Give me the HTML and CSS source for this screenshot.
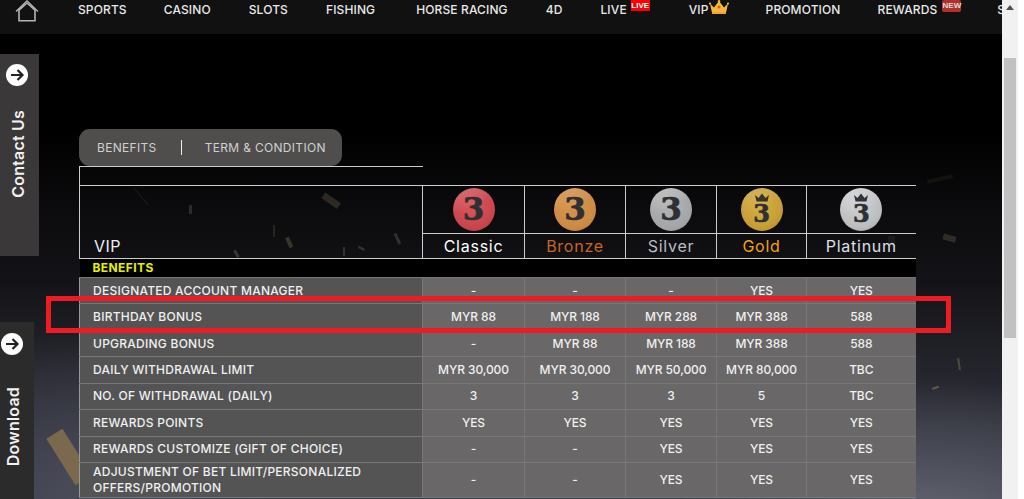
FILE: index.html
```html
<!DOCTYPE html>
<html lang="en">
<head>
<meta charset="utf-8">
<title>VIP Benefits</title>
<link rel="stylesheet" href="styles.css">
</head>
<body>
<div class="shell">
  <div class="viewport">
    <header class="topbar">
      <a class="home" aria-label="Home">
        <svg width="24" height="22" viewBox="0 0 24 22"><path d="M1 11.500 12 .8l11 10.700" fill="none" stroke="#bdbdbd" stroke-width="1.200"/><path d="M4 10.200 12 3l8 7.200V20.700H4Z" fill="none" stroke="#b5b5b5" stroke-width="1.600"/></svg>
      </a>
      <nav class="nav">
        <a class="nav-item">SPORTS</a>
        <a class="nav-item nudge-back">CASINO</a>
        <a class="nav-item">SLOTS</a>
        <a class="nav-item">FISHING</a>
        <a class="nav-item nudge-3">HORSE RACING</a>
        <a class="nav-item">4D</a>
        <a class="nav-item">LIVE<span class="badge badge-live">LIVE</span></a>
        <a class="nav-item nudge-2">VIP<svg class="crown" width="20" height="14" viewBox="0 0 20 14"><path d="M1 3.500 5 7.500 10 1l5 6.500 4-4-1.800 8.500H2.800Z" fill="#f7b73c"/><rect x="3" y="12" width="14" height="2" fill="#eea52c"/><circle cx="1" cy="3.500" r="1.100" fill="#f7b73c"/><circle cx="19" cy="3.500" r="1.100" fill="#f7b73c"/><circle cx="10" cy="1.200" r="1.200" fill="#f7b73c"/><circle cx="10" cy="7" r="1.500" fill="#e0562a"/></svg></a>
        <a class="nav-item">PROMOTION</a>
        <a class="nav-item nudge-back">REWARDS<span class="badge badge-new">NEW</span></a>
        <a class="nav-item">SPECIAL</a>
      </nav>
    </header>

    <main class="content">
      <div class="tabs">
        <a class="tab">BENEFITS</a>
        <span class="tab-sep"></span>
        <a class="tab">TERM &amp; CONDITION</a>
      </div>
      <table class="vip">
        <colgroup>
          <col class="c-label"><col class="c1"><col class="c2"><col class="c3"><col class="c4"><col class="c5">
        </colgroup>
        <tbody>
          <tr class="r-top"><td class="corner"></td><td colspan="5" class="blank"></td></tr>
          <tr class="r-medal">
            <td rowspan="2" class="vip-title">VIP</td>
            <td class="medal-cell"><div class="medal m-classic"><span class="three">3</span></div></td>
            <td class="medal-cell"><div class="medal m-bronze"><span class="three">3</span></div></td>
            <td class="medal-cell"><div class="medal m-silver"><span class="three">3</span></div></td>
            <td class="medal-cell"><div class="medal m-gold"><svg class="mini-crown" width="16" height="10" viewBox="0 0 16 10"><path d="M1 2 4.500 5 8 .5 11.500 5 15 2 13.500 8.500H2.500Z" fill="#3a3226"/></svg><span class="three three-low">3</span></div></td>
            <td class="medal-cell end"><div class="medal m-platinum"><svg class="mini-crown" width="16" height="10" viewBox="0 0 16 10"><path d="M1 2 4.500 5 8 .5 11.500 5 15 2 13.500 8.500H2.500Z" fill="#33343a"/></svg><span class="three three-low">3</span></div></td>
          </tr>
          <tr class="r-name">
            <td class="name n-classic">Classic</td>
            <td class="name n-bronze">Bronze</td>
            <td class="name n-silver">Silver</td>
            <td class="name n-gold">Gold</td>
            <td class="name n-platinum end">Platinum</td>
          </tr>
          <tr class="r-head"><td colspan="6">BENEFITS</td></tr>
          <tr class="r"><th>DESIGNATED ACCOUNT MANAGER</th><td>-</td><td>-</td><td>-</td><td>YES</td><td>YES</td></tr>
          <tr class="r"><th>BIRTHDAY BONUS</th><td>MYR 88</td><td>MYR 188</td><td>MYR 288</td><td>MYR 388</td><td>588</td></tr>
          <tr class="r"><th>UPGRADING BONUS</th><td>-</td><td>MYR 88</td><td>MYR 188</td><td>MYR 388</td><td>588</td></tr>
          <tr class="r"><th>DAILY WITHDRAWAL LIMIT</th><td>MYR 30,000</td><td>MYR 30,000</td><td>MYR 50,000</td><td>MYR 80,000</td><td>TBC</td></tr>
          <tr class="r"><th>NO. OF WITHDRAWAL (DAILY)</th><td>3</td><td>3</td><td>3</td><td>5</td><td>TBC</td></tr>
          <tr class="r"><th>REWARDS POINTS</th><td>YES</td><td>YES</td><td>YES</td><td>YES</td><td>YES</td></tr>
          <tr class="r"><th>REWARDS CUSTOMIZE (GIFT OF CHOICE)</th><td>-</td><td>-</td><td>YES</td><td>YES</td><td>YES</td></tr>
          <tr class="r r-tall"><th>ADJUSTMENT OF BET LIMIT/PERSONALIZED OFFERS/PROMOTION</th><td>-</td><td>-</td><td>YES</td><td>YES</td><td>YES</td></tr>
        </tbody>
      </table>
    </main>

    <svg class="confetti" width="1002" height="499" viewBox="0 0 1002 499" aria-hidden="true">
      <g fill="#8a7a5c">
        <rect x="59.500" y="429.500" width="19" height="55" transform="rotate(-32 69 457)" fill="#7a694c"/>
        <rect x="322" y="197" width="19" height="7" transform="rotate(35 331 200)" opacity=".28"/>
        <rect x="189" y="205" width="3" height="9" opacity=".28"/>
        <rect x="130" y="196" width="22" height="1" transform="rotate(50 141 197)" opacity=".15"/>
        <rect x="287" y="237" width="4" height="11" transform="rotate(-25 289 242)" opacity=".35"/>
        <rect x="396" y="233" width="3" height="12" transform="rotate(-25 397 239)" opacity=".3"/>
        <rect x="358" y="247" width="7" height="2.500" transform="rotate(25 361 248)" opacity=".3"/>
        <rect x="235" y="250" width="3" height="8" transform="rotate(-30 236 254)" opacity=".35"/>
        <rect x="343" y="247" width="2" height="9" opacity=".3"/>
        <rect x="273" y="225" width="2" height="12" opacity=".22"/>
        <rect x="943" y="235" width="13" height="6" transform="rotate(15 949 238)" opacity=".28"/>
        <rect x="927" y="177" width="26" height="4" transform="rotate(-12 940 179)" opacity=".1"/>
        <rect x="888" y="236" width="7" height="11" opacity=".12"/>
        <rect x="958" y="358" width="2" height="12" transform="rotate(-8 959 364)" opacity=".45"/>
        <rect x="932" y="387" width="7" height="2" transform="rotate(-20 935 388)" opacity=".6"/>
      </g>
    </svg>

    <aside class="side side-contact">
      <span class="side-icon"><svg width="22" height="22" viewBox="0 0 22 22"><circle cx="11" cy="11" r="11" fill="#fff"/><path d="M5 11h11M11.500 6l5 5-5 5" fill="none" stroke="#222" stroke-width="2.200"/></svg></span>
      <span class="side-label">Contact Us</span>
    </aside>
    <aside class="side side-download">
      <span class="side-icon"><svg width="22" height="22" viewBox="0 0 22 22"><circle cx="11" cy="11" r="11" fill="#fff"/><path d="M5 11h11M11.500 6l5 5-5 5" fill="none" stroke="#222" stroke-width="2.200"/></svg></span>
      <span class="side-label">Download</span>
    </aside>

    <div class="highlight"></div>
  </div>

  <div class="scrollbar">
    <span class="sb-arrow"></span>
    <span class="sb-thumb"></span>
  </div>
</div>
</body>
</html>
```

FILE: styles.css
```css
* { box-sizing: border-box; }
html, body { margin: 0; height: 100%; background: #fff; overflow: hidden; }
body { font-family: Inter, "Liberation Sans", sans-serif; color: #eee; }

.shell { display: flex; width: 1018px; height: 499px; }

.viewport {
  position: relative;
  width: 1002px;
  height: 499px;
  overflow: hidden;
  background:
    radial-gradient(ellipse 260px 150px at 930px 530px, #666873 0%, rgba(84,86,98,.7) 50%, rgba(60,62,74,0) 100%),
    radial-gradient(ellipse 200px 170px at 90px 500px, #4a4c5a 0%, rgba(60,62,74,0) 100%),
    linear-gradient(#000 0, #000 130px, #0a0a0c 200px, #131317 280px, #24252c 370px, #3a3c47 499px);
}

/* top bar */
.topbar {
  position: relative;
  z-index: 2;
  display: flex;
  height: 34px;
  background: #111;
  overflow: hidden;
}
.home { display: block; flex: none; width: 78px; padding-left: 15px; }
.home svg { display: block; }
.nav { display: flex; gap: 38px; padding-top: 3px; white-space: nowrap; }
.nav-item {
  display: flex;
  align-items: flex-start;
  font-size: 12px;
  line-height: 14px;
  font-weight: 500;
  letter-spacing: .12px;
  color: #e9e9e9;
}
.nudge-back { margin-left: -1px; }
.nudge-2 { margin-left: 2px; }
.nudge-3 { margin-left: 3px; }
.badge {
  flex: none;
  margin-top: -3px;
  width: 19px;
  font-family: "Liberation Sans", sans-serif;
  font-weight: 700;
  text-align: center;
  letter-spacing: 0;
}
.badge-live {
  height: 11px;
  margin-left: 4px;
  margin-right: -1px;
  background: #f00;
  color: #fff;
  font-size: 8px;
  line-height: 11px;
}
.badge-new {
  height: 12px;
  margin-left: 5px;
  margin-right: -2px;
  border-radius: 2px;
  background: #b3302c;
  color: #ddd;
  font-size: 8px;
  line-height: 12px;
}
.crown { flex: none; margin-top: -3px; margin-right: -1px; }

/* page content */
.content { position: relative; z-index: 1; padding: 95px 0 0 79px; }

.tabs {
  display: flex;
  align-items: center;
  width: 263px;
  height: 37px;
  padding: 0 0 1px 18px;
  border-radius: 11px;
  background: #4f4e4c;
}
.tab { font-size: 12px; letter-spacing: .32px; color: #d0d0d0; white-space: nowrap; }
.tab-sep { width: 1px; height: 15px; margin: 0 23px 0 24px; background: #eee; }

/* table */
.vip {
  width: 836px;
  table-layout: fixed;
  border-collapse: collapse;
  border-spacing: 0;
}
.c-label { width: 343px; }
.c1 { width: 102px; }
.c2 { width: 101px; }
.c3 { width: 91px; }
.c4 { width: 90px; }
.c5 { width: 109px; }

.vip td, .vip th { padding: 0; }

.r-top td { height: 19px; }
.corner { border-top: 1px solid #ccc; border-left: 1px solid #ccc; }
.blank { border: 0; }

.r-medal td { height: 48px; }
.vip-title {
  vertical-align: bottom;
  padding: 0 0 2px 14px !important;
  font-size: 16px;
  line-height: 20px;
  letter-spacing: .4px;
  color: #eee;
  border: 1px solid #ccc;
}
.medal-cell {
  border: 1px solid #ccc;
  text-align: center;
  vertical-align: middle;
}
.end { border-right: 0 !important; }

.medal {
  position: relative;
  display: flex;
  align-items: center;
  justify-content: center;
  width: 42px;
  height: 43px;
  margin: 0 auto;
  border-radius: 50%;
}
.three {
  font-family: "DejaVu Serif", serif;
  font-weight: 700;
  font-size: 31px;
  line-height: 1;
  color: #2e3034;
  -webkit-text-stroke: .7px #2e3034;
}
.three-low { font-size: 24px; margin-top: 9px; }
.mini-crown { position: absolute; top: 5px; left: 13px; }
.m-classic { background: linear-gradient(160deg, rgba(255,255,255,.22), rgba(255,255,255,0) 45%), radial-gradient(circle at 45% 40%, #d9575d, #c9454c 65%, #a83a40); }
.m-bronze { background: linear-gradient(160deg, rgba(255,255,255,.2), rgba(255,255,255,0) 45%), radial-gradient(circle at 45% 40%, #d8954f, #cc8a44 65%, #b5722f); }
.m-silver { background: linear-gradient(160deg, rgba(255,255,255,.3), rgba(255,255,255,0) 45%), radial-gradient(circle at 45% 40%, #b4b6b8, #a3a5a7 65%, #8e9092); }
.m-gold { background: linear-gradient(160deg, rgba(255,255,255,.18), rgba(255,255,255,0) 45%), radial-gradient(circle at 45% 40%, #d5b04a, #c79c35 65%, #a98324); }
.m-platinum { background: linear-gradient(160deg, rgba(255,255,255,.35), rgba(255,255,255,0) 50%), radial-gradient(circle at 45% 40%, #d0d1d2, #bcbdbe 65%, #8f9092); }

.r-name td { height: 25px; }
.name {
  border: 1px solid #ccc;
  text-align: center;
  font-size: 16px;
  line-height: 20px;
  letter-spacing: .75px;
}
.n-classic { color: #fff; }
.n-bronze { color: #c9641f; }
.n-silver { color: #b9bcc0; }
.n-gold { color: #f2a20c; }
.n-platinum { color: #dde0e4; }

.r-head td {
  height: 19px;
  padding: 0 0 2px 13px;
  background: #000;
  color: #e4f000;
  font-size: 12px;
  font-weight: 700;
  line-height: 15px;
  letter-spacing: .4px;
}

.r th, .r td {
  height: 26.43px;
  border: 1px solid #777;
  font-size: 12px;
  line-height: 16px;
  font-weight: 500;
  color: #f0f0f0;
  vertical-align: middle;
}
.r th {
  padding-left: 13px;
  padding-right: 24px;
  text-align: left;
  letter-spacing: .25px;
  background: #545454;
  border-left: 1px solid #999;
}
.r td {
  text-align: center;
  letter-spacing: -.1px;
  background: #696767;
}
.r td:last-child { border-right: 0; }
.r-tall th, .r-tall td { height: 35px; }

/* decoration */
.confetti { position: absolute; top: 0; left: 0; pointer-events: none; z-index: 0; }

/* side tabs */
.side {
  position: absolute;
  left: 0;
  z-index: 3;
  display: flex;
  flex-direction: column;
  align-items: center;
}
.side-contact { top: 54px; width: 39px; height: 202px; background: #3a3838; padding-top: 10px; }
.side-download { top: 322px; width: 34px; height: 177px; background: #2c2b2b; padding-top: 11px; }
.side-icon { display: block; height: 22px; }
.side-icon svg { display: block; }
.side-contact .side-icon { margin-left: -5px; }
.side-download .side-icon { margin-left: -11px; }
.side-label {
  writing-mode: vertical-rl;
  transform: rotate(180deg);
  font-size: 16px;
  line-height: 20px;
  font-weight: 600;
  letter-spacing: .2px;
  color: #f2f2f2;
  white-space: nowrap;
}
.side-contact .side-label { margin: 24px 0 0 -3px; }
.side-download .side-label { margin: 32px 0 0 -8px; }

/* red annotation */
.highlight {
  position: absolute;
  z-index: 4;
  left: 46px;
  top: 296px;
  width: 905px;
  height: 37px;
  border: 5px solid #ed1c24;
}

/* fake scrollbar */
.scrollbar {
  position: relative;
  flex: none;
  width: 16px;
  height: 499px;
  background: #f1f1f1;
}
.sb-arrow {
  position: absolute;
  top: 5px;
  left: 4px;
  width: 0;
  height: 0;
  border-left: 4px solid transparent;
  border-right: 4px solid transparent;
  border-bottom: 5px solid #505050;
}
.sb-thumb {
  position: absolute;
  top: 58px;
  left: 2px;
  width: 12px;
  height: 280px;
  background: #c1c1c1;
}
```
